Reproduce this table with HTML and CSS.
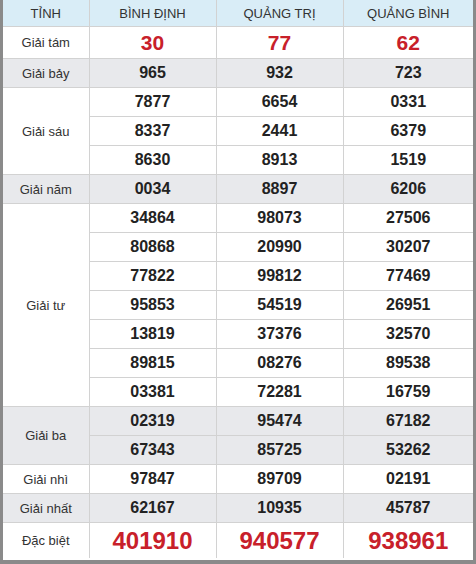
FILE: index.html
```html
<!DOCTYPE html>
<html>
<head>
<meta charset="utf-8">
<link rel="stylesheet" href="styles.css">
</head>
<body>
<div class="frame">
<table class="kq">
<colgroup><col class="c1"><col class="c2"><col class="c3"><col class="c4"></colgroup>
<thead>
<tr class="hd"><th>TỈNH</th><th>BÌNH ĐỊNH</th><th>QUẢNG TRỊ</th><th>QUẢNG BÌNH</th></tr>
</thead>
<tbody>
<tr class="r8"><td class="lb">Giải tám</td><td class="red g8">30</td><td class="red g8">77</td><td class="red g8">62</td></tr>
<tr class="alt"><td class="lb">Giải bảy</td><td class="n">965</td><td class="n">932</td><td class="n">723</td></tr>
<tr><td class="lb" rowspan="3">Giải sáu</td><td class="n">7877</td><td class="n">6654</td><td class="n">0331</td></tr>
<tr><td class="n">8337</td><td class="n">2441</td><td class="n">6379</td></tr>
<tr><td class="n">8630</td><td class="n">8913</td><td class="n">1519</td></tr>
<tr class="alt"><td class="lb">Giải năm</td><td class="n">0034</td><td class="n">8897</td><td class="n">6206</td></tr>
<tr><td class="lb" rowspan="7">Giải tư</td><td class="n">34864</td><td class="n">98073</td><td class="n">27506</td></tr>
<tr><td class="n">80868</td><td class="n">20990</td><td class="n">30207</td></tr>
<tr><td class="n">77822</td><td class="n">99812</td><td class="n">77469</td></tr>
<tr><td class="n">95853</td><td class="n">54519</td><td class="n">26951</td></tr>
<tr><td class="n">13819</td><td class="n">37376</td><td class="n">32570</td></tr>
<tr><td class="n">89815</td><td class="n">08276</td><td class="n">89538</td></tr>
<tr><td class="n">03381</td><td class="n">72281</td><td class="n">16759</td></tr>
<tr class="alt"><td class="lb" rowspan="2">Giải ba</td><td class="n">02319</td><td class="n">95474</td><td class="n">67182</td></tr>
<tr class="alt"><td class="n">67343</td><td class="n">85725</td><td class="n">53262</td></tr>
<tr><td class="lb">Giải nhì</td><td class="n">97847</td><td class="n">89709</td><td class="n">02191</td></tr>
<tr class="alt"><td class="lb">Giải nhất</td><td class="n">62167</td><td class="n">10935</td><td class="n">45787</td></tr>
<tr class="db"><td class="lb">Đặc biệt</td><td class="red gdb">401910</td><td class="red gdb">940577</td><td class="red gdb">938961</td></tr>
</tbody>
</table>
</div>
</body>
</html>
```
FILE: styles.css
```css
html, body {
  margin: 0;
  padding: 0;
  background: #ffffff;
}
.frame {
  width: 476px;
  height: 564px;
  box-sizing: border-box;
  border-left: 3px solid #8a8a8a;
  border-right: 3px solid #8a8a8a;
  border-bottom: 4px solid #8a8a8a;
  overflow: hidden;
}
.kq {
  width: 100%;
  border-collapse: collapse;
  table-layout: fixed;
  font-family: "Liberation Sans", Arial, sans-serif;
}
.c1 { width: 86px; }
.c2 { width: 127px; }
.c3 { width: 127px; }
.c4 { width: 130px; }
.kq th, .kq td {
  border: 1px solid #d2d2d2;
  text-align: center;
  padding: 0;
}
.kq tr > :first-child { border-left: none; }
.kq tr > :last-child { border-right: none; }
.kq thead th { border-top: none; }
.hd th {
  background: #d9edf7;
  height: 26px;
  font-weight: normal;
  font-size: 13px;
  color: #333;
}
.kq td { height: 28px; }
.r8 td { height: 31px; }
.db td { height: 35px; border-bottom: none; }
.alt td { background: #e8e9ec; }
.lb {
  font-size: 13px;
  color: #333;
}
.n {
  font-size: 16px;
  font-weight: bold;
  color: #222;
}
.red { color: #c8202a; font-weight: bold; }
.g8 { font-size: 21px; }
.gdb { font-size: 24px; }
```
